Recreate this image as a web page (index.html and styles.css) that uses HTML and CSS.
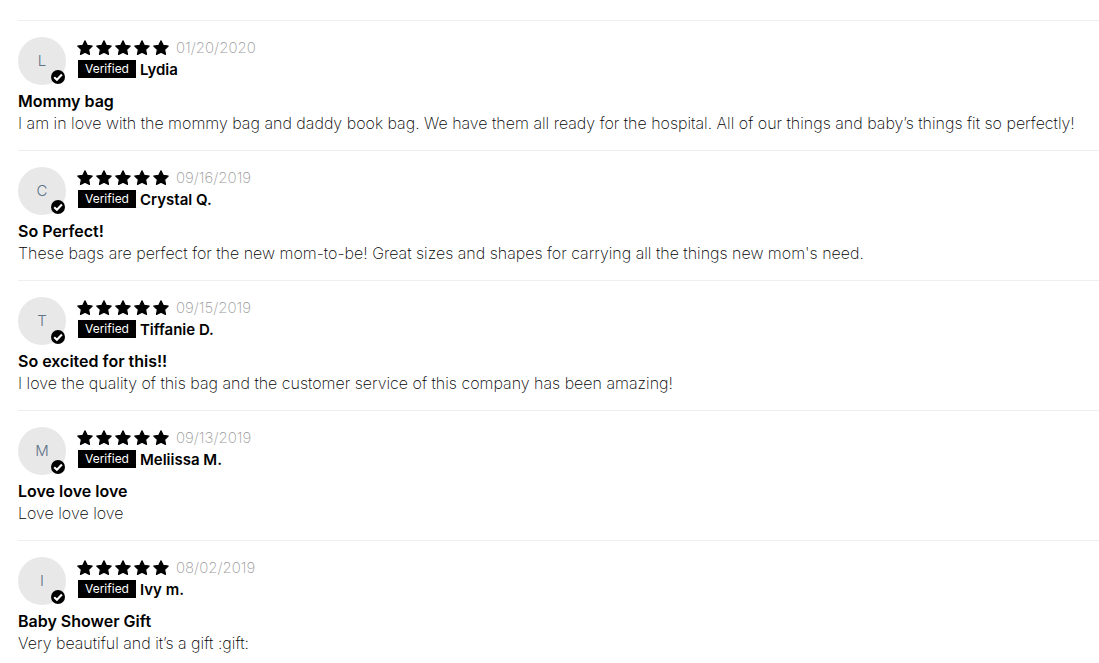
FILE: index.html
```html
<!DOCTYPE html>
<html lang="en">
<head>
<meta charset="utf-8">
<meta name="viewport" content="width=device-width, initial-scale=1">
<title>Customer Reviews</title>
<link rel="stylesheet" href="styles.css">
</head>
<body>
<svg class="defs" aria-hidden="true">
  <defs>
    <path id="star" d="M8 0.8 L10.2 5.3 L15.2 6 L11.6 9.5 L12.5 14.4 L8 12.1 L3.5 14.4 L4.4 9.5 L0.8 6 L5.8 5.3 Z" stroke="#000" stroke-width="1.2" stroke-linejoin="round"/>
    <g id="stars">
      <use href="#star"/><use href="#star" x="19"/><use href="#star" x="38"/><use href="#star" x="57"/><use href="#star" x="76"/>
    </g>
    <g id="check">
      <circle cx="7" cy="7" r="7" fill="#000"/>
      <path d="M3.2 7.2 L5.9 9.7 L10.9 4.6" fill="none" stroke="#fff" stroke-width="2.1"/>
    </g>
  </defs>
</svg>
<main class="reviews">
  <article class="review">
    <header class="review-head">
      <div class="avatar">L<svg class="avatar-check" viewBox="0 0 14 14" aria-hidden="true"><use href="#check"/></svg></div>
      <div class="meta">
        <div class="rating"><svg class="stars" viewBox="0 0 92 16" role="img" aria-label="5 stars"><use href="#stars"/></svg><time class="date" datetime="2020-01-20">01/20/2020</time></div>
        <div class="author"><span class="badge">Verified</span><span class="name">Lydia</span></div>
      </div>
    </header>
    <h2 class="title">Mommy bag</h2>
    <p class="body">I am in love with the mommy bag and daddy book bag. We have them all ready for the hospital. All of our things and baby’s things fit so perfectly!</p>
  </article>
  <article class="review">
    <header class="review-head">
      <div class="avatar">C<svg class="avatar-check" viewBox="0 0 14 14" aria-hidden="true"><use href="#check"/></svg></div>
      <div class="meta">
        <div class="rating"><svg class="stars" viewBox="0 0 92 16" role="img" aria-label="5 stars"><use href="#stars"/></svg><time class="date" datetime="2019-09-16">09/16/2019</time></div>
        <div class="author"><span class="badge">Verified</span><span class="name">Crystal Q.</span></div>
      </div>
    </header>
    <h2 class="title">So Perfect!</h2>
    <p class="body">These bags are perfect for the new mom-to-be! Great sizes and shapes for carrying all the things new mom's need.</p>
  </article>
  <article class="review">
    <header class="review-head">
      <div class="avatar">T<svg class="avatar-check" viewBox="0 0 14 14" aria-hidden="true"><use href="#check"/></svg></div>
      <div class="meta">
        <div class="rating"><svg class="stars" viewBox="0 0 92 16" role="img" aria-label="5 stars"><use href="#stars"/></svg><time class="date" datetime="2019-09-15">09/15/2019</time></div>
        <div class="author"><span class="badge">Verified</span><span class="name">Tiffanie D.</span></div>
      </div>
    </header>
    <h2 class="title">So excited for this!!</h2>
    <p class="body">I love the quality of this bag and the customer service of this company has been amazing!</p>
  </article>
  <article class="review">
    <header class="review-head">
      <div class="avatar">M<svg class="avatar-check" viewBox="0 0 14 14" aria-hidden="true"><use href="#check"/></svg></div>
      <div class="meta">
        <div class="rating"><svg class="stars" viewBox="0 0 92 16" role="img" aria-label="5 stars"><use href="#stars"/></svg><time class="date" datetime="2019-09-13">09/13/2019</time></div>
        <div class="author"><span class="badge">Verified</span><span class="name">Meliissa M.</span></div>
      </div>
    </header>
    <h2 class="title">Love love love</h2>
    <p class="body">Love love love</p>
  </article>
  <article class="review">
    <header class="review-head">
      <div class="avatar">I<svg class="avatar-check" viewBox="0 0 14 14" aria-hidden="true"><use href="#check"/></svg></div>
      <div class="meta">
        <div class="rating"><svg class="stars" viewBox="0 0 92 16" role="img" aria-label="5 stars"><use href="#stars"/></svg><time class="date" datetime="2019-08-02">08/02/2019</time></div>
        <div class="author"><span class="badge">Verified</span><span class="name">Ivy m.</span></div>
      </div>
    </header>
    <h2 class="title">Baby Shower Gift</h2>
    <p class="body">Very beautiful and it’s a gift :gift:</p>
  </article>
</main>
</body>
</html>
```
FILE: styles.css
```css
* { box-sizing: border-box; }
body {
  margin: 0;
  background: #fff;
  color: #000;
  font-family: "Century Gothic", Inter, "Liberation Sans", sans-serif;
  font-size: 16px;
  font-weight: 200;
  line-height: 22px;
}
.defs { position: absolute; width: 0; height: 0; }
.reviews { padding: 20px 0 0 18px; }
.review { border-top: 1px solid #eee; padding: 16px 0; }
.review:last-child { padding-bottom: 0; }
.review-head { display: flex; gap: 12px; }
.avatar {
  position: relative;
  display: flex;
  align-items: center;
  justify-content: center;
  width: 48px;
  height: 48px;
  border-radius: 50%;
  background: #e8e8e8;
  color: #5f7387;
  font-size: 15px;
  font-weight: 300;
}
.avatar-check { position: absolute; right: 1px; bottom: 1px; width: 14px; height: 14px; }
.rating { display: flex; align-items: center; gap: 7px; height: 22px; }
.stars { width: 92px; height: 16px; margin-left: -1px; }
.date { color: #999; font-size: 15px; }
.author { display: flex; align-items: center; gap: 4px; height: 20px; }
.badge {
  background: #000;
  color: #fff;
  font-size: 12px;
  font-weight: 400;
  line-height: 18px;
  padding: 0 7px;
}
.name { padding-top: 2px; font-size: 15px; font-weight: 600; }
.title { margin: 5px 0 0; font-size: 16px; font-weight: 600; }
.body { margin: 0; }
```
